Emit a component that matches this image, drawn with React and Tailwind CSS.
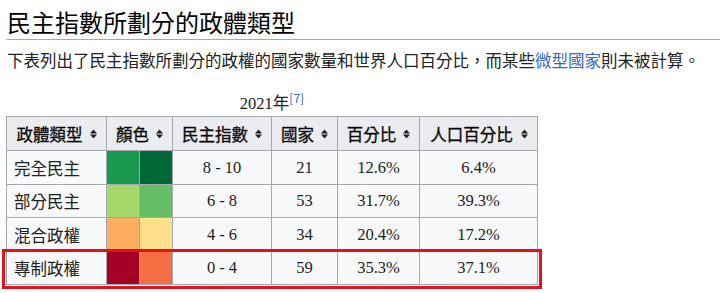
import React from "react";

const SortIcon = () => (
  <svg width="7" height="9" viewBox="0 0 7 9" className="absolute right-[9px] top-1/2 -translate-y-1/2">
    <polygon points="0,4 3.5,0 7,4" fill="#202122" />
    <polygon points="0,5 3.5,9 7,5" fill="#202122" />
  </svg>
);

const rows = [
  { name: "完全民主", c1: "#1a9850", c2: "#006837", range: "8 - 10", n: "21", p: "12.6%", pop: "6.4%", h: "h-[34px]" },
  { name: "部分民主", c1: "#a6d96a", c2: "#66bd63", range: "6 - 8", n: "53", p: "31.7%", pop: "39.3%", h: "h-[33px]" },
  { name: "混合政權", c1: "#fdae61", c2: "#fee08b", range: "4 - 6", n: "34", p: "20.4%", pop: "17.2%", h: "h-[34px]" },
  { name: "專制政權", c1: "#a50026", c2: "#f46d43", range: "0 - 4", n: "59", p: "35.3%", pop: "37.1%", h: "h-[33px]" },
];

const th = "relative border border-[#a2a9b1] bg-[#eaecf0] pl-[7px] pr-[21px] text-center font-normal font-['Noto_Sans_CJK_TC',sans-serif] text-[16.5px] leading-[20px] text-[#000] [-webkit-text-stroke:0.35px_#202122]";
const td = "border border-[#a2a9b1] px-[7px] text-center";

export default function App() {
  return (
    <div className="w-[720px] h-[293px] overflow-hidden bg-white text-[#202122] pl-[6px]">
      <h2 className="mt-[7px] pl-[1px] pb-[2px] border-b border-[#a2a9b1] text-[24px] leading-[30px] font-normal font-['Noto_Sans_CJK_TC',sans-serif] text-[#000]">
        民主指數所劃分的政體類型
      </h2>
      <p className="mt-[8px] pl-[1px] text-[16.5px] leading-[24px] font-['Noto_Sans_CJK_TC',sans-serif] text-[#202122] whitespace-nowrap">
        下表列出了民主指數所劃分的政權的國家數量和世界人口百分比，而某些<span className="text-[#3366cc]">微型國家</span>則未被計算。
      </p>
      <div className="relative mt-[20px] w-[532px] font-['Liberation_Serif','Noto_Sans_CJK_TC',serif]">
        <div className="h-[24px] text-center text-[16.5px] leading-[24px]">
          2021年<sup className="text-[12px] text-[#3366cc] font-['Noto_Sans_CJK_TC',sans-serif]">[7]</sup>
        </div>
        <table className="border-collapse border border-[#a2a9b1] bg-[#f8f9fa] text-[16.5px] leading-[20px] table-fixed w-[532px]">
          <colgroup>
            <col className="w-[100px]" />
            <col className="w-[33px]" />
            <col className="w-[33px]" />
            <col className="w-[99px]" />
            <col className="w-[66px]" />
            <col className="w-[82px]" />
            <col className="w-[118px]" />
          </colgroup>
          <thead>
            <tr className="h-[34px]">
              <th className={th}>政體類型<SortIcon /></th>
              <th className={th} colSpan={2}>顏色<SortIcon /></th>
              <th className={th}>民主指數<SortIcon /></th>
              <th className={th}>國家<SortIcon /></th>
              <th className={th}>百分比<SortIcon /></th>
              <th className={th}>人口百分比<SortIcon /></th>
            </tr>
          </thead>
          <tbody>
            {rows.map((r) => (
              <tr key={r.name} className={r.h}>
                <td className="border border-[#a2a9b1] px-[7px] text-left font-['Noto_Sans_CJK_TC',sans-serif] text-[#202122]">{r.name}</td>
                <td className="border border-[#a2a9b1]" style={{ backgroundColor: r.c1 }}></td>
                <td className="border border-[#a2a9b1]" style={{ backgroundColor: r.c2 }}></td>
                <td className={td}>{r.range}</td>
                <td className={td}>{r.n}</td>
                <td className={td}>{r.p}</td>
                <td className={td}>{r.pop}</td>
              </tr>
            ))}
          </tbody>
        </table>
        <div className="absolute left-[-4px] top-[157px] w-[540px] h-[40px] border-[3px] border-[#e8101a] pointer-events-none"></div>
      </div>
    </div>
  );
}
